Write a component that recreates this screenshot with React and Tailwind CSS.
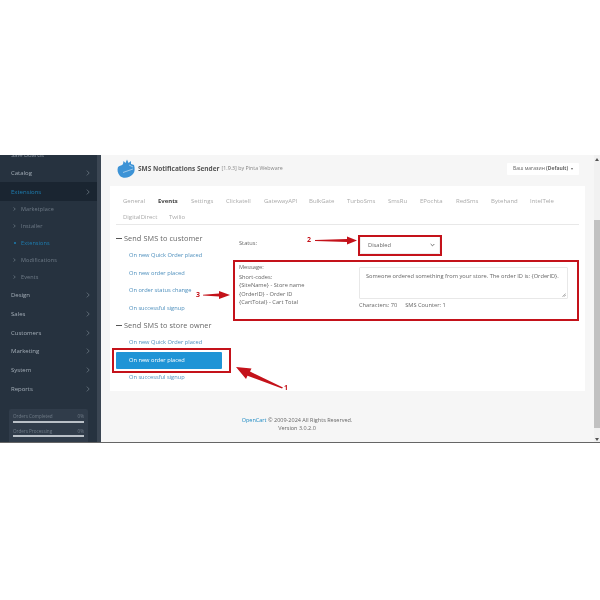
const subMenu = [
  { name: 'Marketplace' },
  { name: 'Installer' },
  { name: 'Extensions', active: true },
  { name: 'Modifications' },
  { name: 'Events' },
];
const menuBottom = ['Design', 'Sales', 'Customers', 'Marketing', 'System', 'Reports'];
const tabs1 = [
  ['General', 'w-[35px]'],
  ['Events', 'w-[33px]'],
  ['Settings', 'w-[35px]'],
  ['Clickatell', 'w-[38px]'],
  ['GatewayAPI', 'w-[45px]'],
  ['BulkGate', 'w-[38px]'],
  ['TurboSms', 'w-[41px]'],
  ['SmsRu', 'w-[32px]'],
  ['EPochta', 'w-[36px]'],
  ['RedSms', 'w-[35px]'],
  ['Bytehand', 'w-[39px]'],
  ['IntelTele', 'w-[36px]'],
];

function Chevron() {
  return (
    <svg width="4" height="6" viewBox="0 0 4 6" fill="none" stroke="#75818d" strokeWidth="0.7" className="mr-[7px]">
      <path d="M0.8 0.6 L3.2 3 L0.8 5.4" />
    </svg>
  );
}

function MenuItem({ name, active }) {
  return (
    <div className={`flex h-[18.7px] items-center justify-between pl-[11px] ${active ? 'bg-[#1a2531] text-[#1d7fb3]' : 'text-[#a3adb7]'}`}>
      <span>{name}</span>
      <Chevron />
    </div>
  );
}

function SubMark({ active }) {
  if (active) {
    return <span className="mx-[0.5px] h-[2px] w-[2px] rounded-full bg-[#1d7fb3]" />;
  }
  return (
    <svg width="3" height="4" viewBox="0 0 3 4" fill="none" stroke="#6f7b87" strokeWidth="0.7">
      <path d="M0.5 0.5 L2.3 2 L0.5 3.5" />
    </svg>
  );
}

function Sidebar() {
  return (
    <aside className="flex h-full w-[97px] shrink-0 flex-col overflow-hidden bg-[#26323f] text-[6px] leading-none">
      <div className="flex h-[8.5px] items-start overflow-hidden pl-[11px] text-[#8b96a1]">
        <span className="-mt-[3px]">Sale Boards</span>
      </div>
      <MenuItem name="Catalog" />
      <MenuItem name="Extensions" active />
      <div>
        {subMenu.map((s) => (
          <div key={s.name} className={`flex h-[17px] items-center gap-[5px] pl-[13px] text-[5.5px] tracking-[0.1px] ${s.active ? 'text-[#1d7fb3]' : 'text-[#6f7b87]'}`}>
            <SubMark active={s.active} />
            <span>{s.name}</span>
          </div>
        ))}
      </div>
      {menuBottom.map((m) => (
        <MenuItem key={m} name={m} />
      ))}
      <div className="mx-[9px] mt-[11px] flex-1 rounded-t-[2px] bg-[#303c4a] px-[4px] pt-[5px] text-[4.6px] text-[#6f7b87]">
        <div className="flex justify-between">
          <span>Orders Completed</span>
          <span>0%</span>
        </div>
        <div className="mt-[2px] h-[2px] bg-[#b9c0c7]" />
        <div className="mt-[6px] flex justify-between">
          <span>Orders Processing</span>
          <span>0%</span>
        </div>
        <div className="mt-[2px] h-[2px] bg-[#b9c0c7]" />
      </div>
    </aside>
  );
}

function SmsLogo() {
  return (
    <svg width="19" height="20" viewBox="0 0 19 20" className="shrink-0">
      <path d="M1 8 C3 6 5 7 6 5 L6.5 2 L8.5 4 L10 0.5 L11.5 4 L14 2 L14 5 L17 6 C18 9 18 13 16 15 C13 19 6 20 3 17 C0.5 14 0 11 1 8 Z" fill="#3d93d6" />
      <path d="M6 13.5 L16 10" stroke="#ffffff" strokeWidth="0.5" fill="none" />
      <path d="M12 6 L16 8" stroke="#ffffff" strokeWidth="0.5" fill="none" />
    </svg>
  );
}

function EventLink({ children, selected }) {
  if (selected) {
    return (
      <div className="flex h-[17px] w-[106px] items-center rounded-[1px] bg-[#1f94d6] pl-[13px] text-white">{children}</div>
    );
  }
  return <div className="flex h-[17.5px] items-center pl-[13px] text-[#4d8fbd]">{children}</div>;
}

function Heading({ children }) {
  return (
    <div className="flex h-[17px] items-center gap-[2px] text-[7.3px] tracking-[0.1px] text-[#666]">
      <span className="h-[1.5px] w-[6px] bg-[#555]" />
      <span>{children}</span>
    </div>
  );
}

function Panel() {
  return (
    <section className="ml-[9px] mt-[8px] h-[205px] w-[475px] bg-white">
      <div className="mx-[6px] h-[39px] border-b border-[#e8e8e8] pt-[7px] text-[6px] text-[#aaa]">
        <div className="flex h-[16px] items-center">
          {tabs1.map(([t, w]) => (
            <span key={t} className={`${w} shrink-0 pl-[7px] ${t === 'Events' ? 'font-bold text-[#444]' : ''}`}>{t}</span>
          ))}
        </div>
        <div className="flex h-[16px] items-center">
          <span className="w-[46px] pl-[7px]">DigitalDirect</span>
          <span className="pl-[7px]">Twilio</span>
        </div>
      </div>
      <div className="flex">
        <div className="ml-[6px] mt-[5px] w-[106px] shrink-0 text-[5.7px]">
          <Heading>Send SMS to customer</Heading>
          <EventLink>On new Quick Order placed</EventLink>
          <EventLink>On new order placed</EventLink>
          <EventLink>On order status change</EventLink>
          <EventLink>On successful signup</EventLink>
          <Heading>Send SMS to store owner</Heading>
          <EventLink>On new Quick Order placed</EventLink>
          <EventLink selected>On new order placed</EventLink>
          <EventLink>On successful signup</EventLink>
        </div>
        <div className="ml-[17px] flex-1 text-[5.7px] text-[#666]">
          <div className="flex h-[34px]">
            <span className="mt-[14px] w-[121px] leading-[8px]">Status:</span>
            <div className="mt-[11px] flex h-[18px] w-[80px] items-center justify-between rounded-[1px] border border-[#eee] pl-[7px] pr-[4px]">
              <span>Disabled</span>
              <svg width="5" height="4" viewBox="0 0 6 4" fill="none" stroke="#555" strokeWidth="1">
                <path d="M0.8 0.8 L3 3 L5.2 0.8" />
              </svg>
            </div>
          </div>
          <div className="flex">
            <div className="w-[120px] leading-[8.2px]">
              <div className="mt-[4px]">Message:</div>
              <div className="mt-[2px]">Short-codes:</div>
              <div>{'{SiteName}'} - Store name</div>
              <div>{'{OrderID}'} - Order ID</div>
              <div>{'{CartTotal}'} - Cart Total</div>
            </div>
            <div className="pt-[8px]">
              <div className="relative h-[32px] w-[209px] whitespace-nowrap rounded-[1px] border border-[#e8e8e8] px-[6px] pt-[4px] leading-[8px]">
                Someone ordered something from your store. The order ID is: {'{OrderID}'}.
                <svg width="4" height="4" viewBox="0 0 4 4" stroke="#666" strokeWidth="0.6" className="absolute bottom-[1px] right-[1px]">
                  <path d="M0.5 3.7 L3.7 0.5 M2 3.7 L3.7 2" />
                </svg>
              </div>
              <div className="mt-[2px] flex gap-[8px] leading-[8px]">
                <span>Characters: 70</span>
                <span>SMS Counter: 1</span>
              </div>
            </div>
          </div>
        </div>
      </div>
    </section>
  );
}

function Annotations() {
  return (
    <>
      <div className="absolute left-[112px] top-[348px] h-[25px] w-[119px] border-2 border-[#c4121a]" />
      <div className="absolute left-[358px] top-[235px] h-[21px] w-[84px] border-2 border-[#c4121a]" />
      <div className="absolute left-[233px] top-[260px] h-[61px] w-[346px] border-2 border-[#c4121a]" />
      <span className="absolute left-[307px] top-[235px] text-[7px] font-bold leading-[10px] text-[#c4121a]">2</span>
      <span className="absolute left-[196px] top-[290px] text-[7px] font-bold leading-[10px] text-[#c4121a]">3</span>
      <span className="absolute left-[284px] top-[383px] text-[7px] font-bold leading-[10px] text-[#c4121a]">1</span>
      <svg className="absolute left-0 top-0" width="600" height="600" viewBox="0 0 600 600" fill="#c4121a">
        <path d="M315 240 L347 239 L347 236.5 L357 240.5 L347 244.5 L347 242 L315 241 Z" />
        <path d="M203 294.7 L219 293.6 L219 291 L230 295 L219 299 L219 296.4 L203 295.5 Z" />
        <path d="M283 387.5 L250 371.5 L251.5 368.5 L236 367 L246 379 L247.5 375.8 L282 388.5 Z" />
      </svg>
    </>
  );
}

export default function App() {
  return (
    <div className="relative h-[600px] w-[600px] overflow-hidden bg-white font-['Open_Sans',sans-serif] blur-[0.3px]">
      <div className="h-[155px]" />
      <div className="flex h-[288px] border-b border-[#666] bg-[#f6f6f6]">
        <Sidebar />
        <div className="w-[4px] shrink-0 bg-[#3b4653]" />
        <main className="min-w-0 flex-1">
          <div className="flex h-[23px] items-center pl-[16px] pr-[15px] pt-[5px]">
            <SmsLogo />
            <span className="ml-[2px] text-[6.5px] font-bold text-[#555]">SMS Notifications Sender</span>
            <span className="ml-[2px] text-[5.3px] text-[#888]">[1.9.3] by Pinta Webware</span>
            <div className="ml-auto flex h-[12px] w-[72px] items-center justify-center gap-[2px] rounded-[1px] bg-white text-[5px] text-[#666]">
              <span>Ваш магазин <b>(Default)</b></span>
              <span className="ml-[1px] text-[4px]">▾</span>
            </div>
          </div>
          <Panel />
          <div className="mt-[26px] w-[392px] text-center text-[5.5px] leading-[7.5px] text-[#666]">
            <div>
              <span className="text-[#1f8bc4]">OpenCart</span> © 2009-2024 All Rights Reserved.
            </div>
            <div>Version 3.0.2.0</div>
          </div>
        </main>
        <div className="flex w-[6px] shrink-0 flex-col items-center bg-[#f1f1f1]">
          <span className="mt-[3px] h-0 w-0 border-x-[2px] border-b-[3px] border-x-transparent border-b-[#555]" />
          <span className="h-[59px]" />
          <div className="h-[208px] w-full bg-[#c1c1c1]" />
          <span className="mt-[10px] h-0 w-0 border-x-[2px] border-t-[3px] border-x-transparent border-t-[#555]" />
        </div>
      </div>
      <Annotations />
    </div>
  );
}
